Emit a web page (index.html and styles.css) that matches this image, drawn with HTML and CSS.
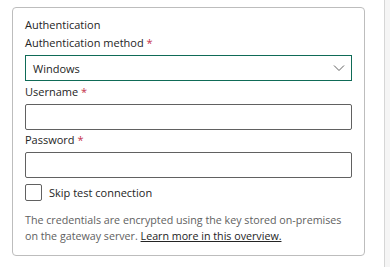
FILE: index.html
```html
<!DOCTYPE html>
<html lang="en">
<head>
<meta charset="utf-8">
<title>Authentication</title>
<link rel="stylesheet" href="styles.css">
</head>
<body>
<div class="page">
  <main class="main">
    <section class="card">
      <div class="section-title">Authentication</div>
      <label class="label">Authentication method <span class="req">*</span></label>
      <div class="select">
        <span class="select-value">Windows</span>
        <svg class="chevron" width="12" height="8" viewBox="0 0 12 8"><path d="M1 1.5 L6 6.5 L11 1.5" fill="none" stroke="#616161" stroke-width="1"/></svg>
      </div>
      <label class="label">Username <span class="req">*</span></label>
      <div class="input"></div>
      <label class="label">Password <span class="req">*</span></label>
      <div class="input last"></div>
      <div class="check-row">
        <span class="checkbox"></span>
        <span class="check-label">Skip test connection</span>
      </div>
      <p class="help">The credentials are encrypted using the key stored on-premises on the gateway server. <a class="link" href="#">Learn more in this overview.</a></p>
    </section>
  </main>
  <aside class="side"></aside>
</div>
</body>
</html>
```

FILE: styles.css
```css
html, body {
  margin: 0;
  padding: 0;
  background: #ffffff;
}
body {
  font-family: "Open Sans", "Noto Sans", sans-serif;
  color: #242424;
}
.page {
  display: flex;
  height: 267px;
}
.main {
  width: 384px;
  padding: 7px 0 0 12px;
  box-sizing: border-box;
}
.side {
  flex: 1;
  border-left: 1px solid #d6d6d6;
  background: #f5f5f5;
}
.card {
  width: 353px;
  height: 249px;
  box-sizing: border-box;
  border: 1px solid #bdbdbd;
  border-radius: 4px;
  padding: 9px 12px 0 12px;
  display: flex;
  flex-direction: column;
}
.section-title {
  font-size: 11px;
  line-height: 16px;
  height: 17px;
  flex: none;
}
.label {
  font-size: 11px;
  line-height: 16px;
  height: 21px;
  display: block;
  padding-top: 1px;
  box-sizing: border-box;
  flex: none;
}
.req {
  color: #c4314b;
}
.select {
  height: 26px;
  flex: none;
  box-sizing: border-box;
  border: 1px solid #0f6b57;
  display: flex;
  align-items: center;
  justify-content: space-between;
  padding: 0 6px 0 7px;
  margin-bottom: 2px;
}
.select-value {
  font-size: 11px;
}
.chevron {
  display: block;
}
.input {
  height: 26px;
  flex: none;
  box-sizing: border-box;
  border: 1px solid #616161;
  border-radius: 2px;
  margin-bottom: 1px;
}
.input.last {
  margin-bottom: 6px;
}
.check-row {
  display: flex;
  align-items: center;
  gap: 7px;
  height: 17px;
  flex: none;
}
.checkbox {
  width: 17px;
  height: 17px;
  box-sizing: border-box;
  border: 1px solid #616161;
  border-radius: 2px;
}
.check-label {
  font-size: 11px;
  line-height: 16px;
}
.help {
  margin: 11px 0 0 0;
  font-size: 10.7px;
  line-height: 16px;
  color: #616161;
}
.link {
  color: #242424;
  text-decoration: underline;
}
```
